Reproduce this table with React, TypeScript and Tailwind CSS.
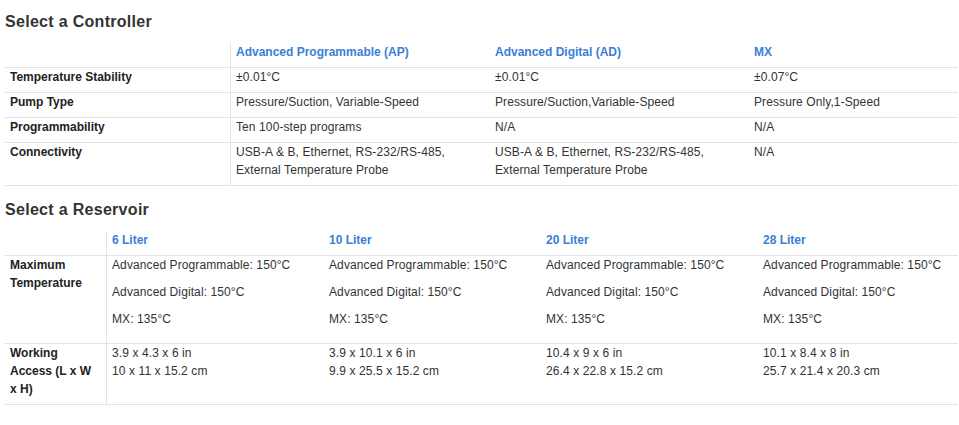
const controllers = [
  { name: "Advanced Programmable (AP)", w: "w-[260px]" },
  { name: "Advanced Digital (AD)", w: "w-[259px]" },
  { name: "MX", w: "w-[209px]" },
];

const controllerRows: { label: string; values: string[][] }[] = [
  { label: "Temperature Stability", values: [["±0.01°C"], ["±0.01°C"], ["±0.07°C"]] },
  {
    label: "Pump Type",
    values: [["Pressure/Suction, Variable-Speed"], ["Pressure/Suction,Variable-Speed"], ["Pressure Only,1-Speed"]],
  },
  { label: "Programmability", values: [["Ten 100-step programs"], ["N/A"], ["N/A"]] },
  {
    label: "Connectivity",
    values: [
      ["USB-A & B, Ethernet, RS-232/RS-485,", "External Temperature Probe"],
      ["USB-A & B, Ethernet, RS-232/RS-485,", "External Temperature Probe"],
      ["N/A"],
    ],
  },
];

const reservoirs = [
  { name: "6 Liter", w: "w-[218px]", dims: ["3.9 x 4.3 x 6 in", "10 x 11 x 15.2 cm"] },
  { name: "10 Liter", w: "w-[217px]", dims: ["3.9 x 10.1 x 6 in", "9.9 x 25.5 x 15.2 cm"] },
  { name: "20 Liter", w: "w-[217px]", dims: ["10.4 x 9 x 6 in", "26.4 x 22.8 x 15.2 cm"] },
  { name: "28 Liter", w: "w-[200px]", dims: ["10.1 x 8.4 x 8 in", "25.7 x 21.4 x 20.3 cm"] },
];

const maxTemps = ["Advanced Programmable: 150°C", "Advanced Digital: 150°C", "MX: 135°C"];

const cell = "align-top pl-[5px] pr-[5px] pt-0 pb-[6px] border-b border-[#e3e3e3] text-left";
const value = "tracking-[0.1px]";

export default function App() {
  return (
    <div
      className="bg-white pl-[5px] pr-[1px] pt-[11px] text-[12px] leading-[18px] text-[#333]"
      style={{ fontFamily: '"Liberation Sans", Arial, sans-serif' }}
    >
      <h2 className="text-[16px] leading-[22px] font-bold text-[#333] tracking-[0.3px] mb-[10px]">
        Select a Controller
      </h2>
      <table className="w-[953px] table-fixed border-separate border-spacing-0">
        <thead>
          <tr>
            <th className={`${cell} w-[225px]`}></th>
            {controllers.map((c, i) => (
              <th
                key={c.name}
                className={`${cell} ${c.w} font-bold text-[#3a7fd5] ${i === 0 ? "border-l" : ""}`}
              >
                {c.name}
              </th>
            ))}
          </tr>
        </thead>
        <tbody>
          {controllerRows.map((r) => (
            <tr key={r.label}>
              <td className={`${cell} font-bold text-[#222]`}>{r.label}</td>
              {r.values.map((v, i) => (
                <td key={i} className={`${cell} ${value} ${i === 0 ? "border-l" : ""}`}>
                  {v.map((line, j) => (
                    <div key={j}>{line}</div>
                  ))}
                </td>
              ))}
            </tr>
          ))}
        </tbody>
      </table>

      <h2 className="text-[16px] leading-[22px] font-bold text-[#333] tracking-[0.3px] mt-[13px] mb-[10px]">
        Select a Reservoir
      </h2>
      <table className="w-[953px] table-fixed border-separate border-spacing-0">
        <thead>
          <tr>
            <th className={`${cell} w-[101px]`}></th>
            {reservoirs.map((r, i) => (
              <th
                key={r.name}
                className={`${cell} ${r.w} font-bold text-[#3a7fd5] ${i === 0 ? "border-l" : ""}`}
              >
                {r.name}
              </th>
            ))}
          </tr>
        </thead>
        <tbody>
          <tr>
            <td className={`${cell} font-bold text-[#222]`}>Maximum Temperature</td>
            {reservoirs.map((r, i) => (
              <td key={r.name} className={`${cell} ${value} ${i === 0 ? "border-l" : ""}`}>
                {maxTemps.map((t) => (
                  <p key={t} className="mb-[9px]">
                    {t}
                  </p>
                ))}
              </td>
            ))}
          </tr>
          <tr>
            <td className={`${cell} font-bold text-[#222]`}>Working Access (L x W x H)</td>
            {reservoirs.map((r, i) => (
              <td key={r.name} className={`${cell} ${value} ${i === 0 ? "border-l" : ""}`}>
                {r.dims.map((d) => (
                  <div key={d}>{d}</div>
                ))}
              </td>
            ))}
          </tr>
        </tbody>
      </table>
    </div>
  );
}
